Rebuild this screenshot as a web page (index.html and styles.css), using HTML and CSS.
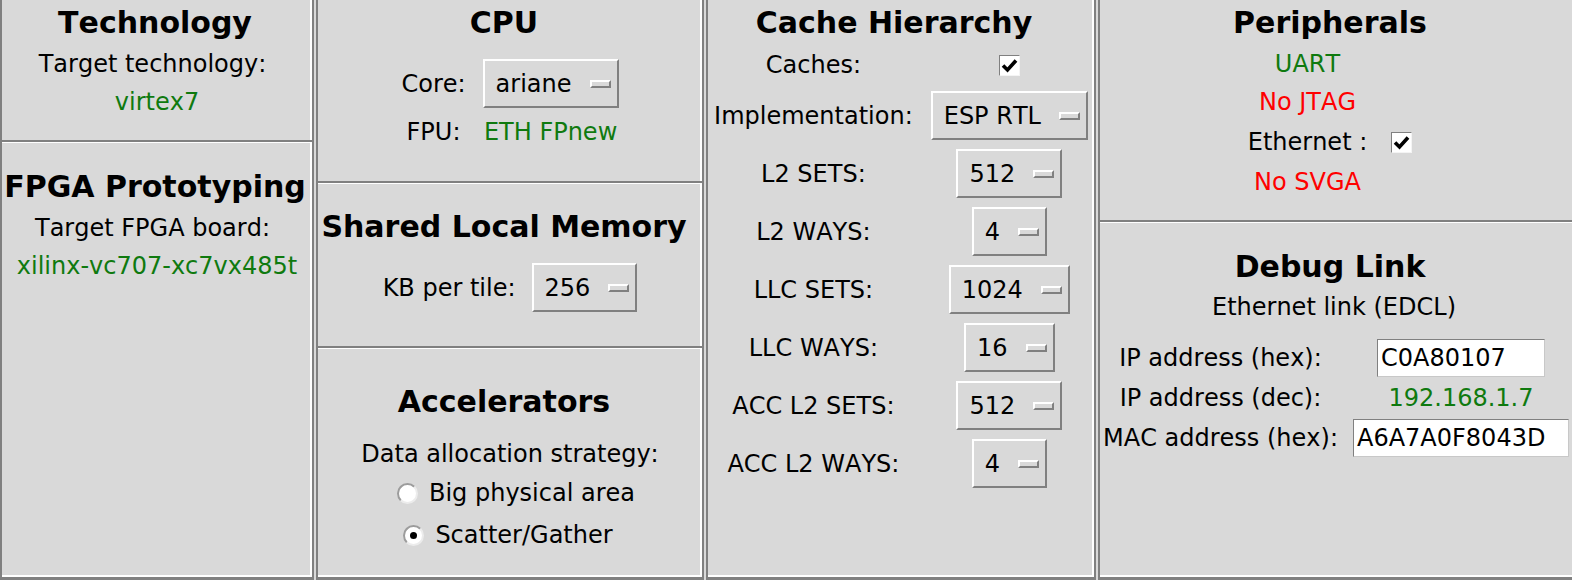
FILE: index.html
```html
<!DOCTYPE html>
<html>
<head>
<meta charset="utf-8">
<title>SoC Config</title>
<link rel="stylesheet" href="styles.css">
</head>
<body>
<div class="app">
  <div class="col col-1">
    <section class="sec sec-tech">
      <div class="title">Technology</div>
      <div class="line first trail">Target technology:</div>
      <div class="line green">virtex7</div>
    </section>
    <section class="sec sec-fpga grow">
      <div class="title">FPGA Prototyping</div>
      <div class="line first trail">Target FPGA board:</div>
      <div class="line green">xilinx-vc707-xc7vx485t</div>
    </section>
  </div>

  <div class="col col-2">
    <section class="sec sec-cpu">
      <div class="title">CPU</div>
      <div class="form form-cpu">
        <div class="lbl">Core:</div>
        <div class="opt"><span class="opt-text">ariane</span><span class="ind"></span></div>
        <div class="lbl">FPU:</div>
        <div class="lbl green">ETH FPnew</div>
      </div>
    </section>
    <section class="sec sec-slm">
      <div class="title">Shared Local Memory</div>
      <div class="form form-slm">
        <div class="lbl">KB per tile:</div>
        <div class="opt"><span class="opt-text">256</span><span class="ind"></span></div>
      </div>
    </section>
    <section class="sec sec-acc grow">
      <div class="title">Accelerators</div>
      <div class="line data-line">Data allocation strategy:</div>
      <div class="radio radio-big"><span class="rb"></span><span>Big physical area</span></div>
      <div class="radio radio-sg"><span class="rb on"></span><span>Scatter/Gather</span></div>
    </section>
  </div>

  <div class="col col-3">
    <section class="sec grow">
      <div class="title">Cache Hierarchy</div>
      <div class="form form-cache">
        <div class="lbl">Caches:</div>
        <div class="chk"><svg width="19" height="19" viewBox="0 0 19 19"><path d="M3 9.5 L7.5 14 L16 4.5" fill="none" stroke="#000" stroke-width="3.6"/></svg></div>
        <div class="lbl">Implementation:</div>
        <div class="opt"><span class="opt-text">ESP RTL</span><span class="ind"></span></div>
        <div class="lbl">L2 SETS:</div>
        <div class="opt"><span class="opt-text">512</span><span class="ind"></span></div>
        <div class="lbl">L2 WAYS:</div>
        <div class="opt"><span class="opt-text">4</span><span class="ind"></span></div>
        <div class="lbl">LLC SETS:</div>
        <div class="opt"><span class="opt-text">1024</span><span class="ind"></span></div>
        <div class="lbl">LLC WAYS:</div>
        <div class="opt"><span class="opt-text">16</span><span class="ind"></span></div>
        <div class="lbl">ACC L2 SETS:</div>
        <div class="opt"><span class="opt-text">512</span><span class="ind"></span></div>
        <div class="lbl">ACC L2 WAYS:</div>
        <div class="opt"><span class="opt-text">4</span><span class="ind"></span></div>
      </div>
    </section>
  </div>

  <div class="col col-4">
    <section class="sec sec-periph">
      <div class="title">Peripherals</div>
      <div class="form form-periph">
        <div class="lbl green">UART</div>
        <div></div>
        <div class="lbl red">No JTAG</div>
        <div></div>
        <div class="lbl">Ethernet :</div>
        <div class="chk"><svg width="19" height="19" viewBox="0 0 19 19"><path d="M3 9.5 L7.5 14 L16 4.5" fill="none" stroke="#000" stroke-width="3.6"/></svg></div>
        <div class="lbl red">No SVGA</div>
        <div></div>
      </div>
    </section>
    <section class="sec sec-debug grow">
      <div class="title">Debug Link</div>
      <div class="line edcl">Ethernet link (EDCL)</div>
      <div class="form form-debug">
        <div class="lbl">IP address (hex):</div>
        <div class="entry entry-hex">C0A80107</div>
        <div class="lbl">IP address (dec):</div>
        <div class="lbl green">192.168.1.7</div>
        <div class="lbl">MAC address (hex):</div>
        <div class="entry entry-mac">A6A7A0F8043D</div>
      </div>
    </section>
  </div>
</div>
</body>
</html>
```
FILE: styles.css
```css
* { box-sizing: border-box; }
html, body { margin: 0; padding: 0; }
body {
  background: #d9d9d9;
  font-family: "DejaVu Sans", "Liberation Sans", sans-serif;
  font-size: 24px;
  font-kerning: none;
  color: #000;
  width: 1572px;
  height: 580px;
  overflow: hidden;
}
.app { display: flex; gap: 2px; height: 580px; }

.col {
  display: flex;
  flex-direction: column;
  height: 580px;
  border-left: 2px solid #808080;
  border-right: 2px solid #808080;
  border-bottom: 3px solid #808080;
  box-shadow: inset -2px -2px 0 #fff;
  flex: none;
}
.col-1 { width: 314px; }
.col-2 { width: 388px; }
.col-3 { width: 390px; }
.col-4 { flex: 1; border-right: none; box-shadow: inset 0 -2px 0 #fff; }

.sec { display: flex; flex-direction: column; align-items: center; flex: none; }
.sec + .sec { border-top: 2px solid #808080; box-shadow: inset 0 1px 0 #fff; }
.sec.grow { flex: 1; }

.title {
  font-weight: bold;
  font-size: 30px;
  margin-top: 1px;
  padding-top: 1px;
  height: 42px;
  line-height: 41px;
  white-space: nowrap;
}
.col-1 .title { padding-right: 4px; }
.col-2 .title { padding-right: 12px; }
.col-3 .title { padding-right: 14px; }

.line { height: 38px; line-height: 38px; white-space: nowrap; }
.line.first { margin-top: 2px; }
.line.trail { padding-right: 9px; }
.green { color: #0f7a0f; }
.red { color: #ff0000; }
.lbl { white-space: nowrap; }

/* column 1 */
.sec-tech { height: 140px; }
.sec-fpga { padding-top: 22px; }

/* column 2 */
.sec-cpu { height: 181px; }
.sec-slm { height: 165px; padding-top: 21px; }
.sec-acc { padding-top: 31px; }

.form { display: grid; justify-content: center; justify-items: center; align-items: center; }
.form-cpu { margin-top: 16px; grid-template-columns: auto auto; grid-template-rows: 49px 38px; column-gap: 17px; row-gap: 5px; }
.form-slm { margin-top: 16px; grid-template-columns: auto auto; grid-template-rows: 49px; column-gap: 16px; }

.data-line { margin-top: 13px; }
.radio { display: flex; align-items: center; height: 38px; gap: 11px; white-space: nowrap; }
.radio-big { margin-top: 1px; margin-left: 12px; }
.radio-sg { margin-top: 4px; margin-right: 4px; }
.rb {
  width: 21px; height: 21px; border-radius: 50%;
  background: #fff;
  border: 2px solid;
  border-color: #9c9c9c #ececec #ececec #9c9c9c;
  display: flex; align-items: center; justify-content: center;
}
.rb.on::after { content: ""; width: 7px; height: 7px; border-radius: 50%; background: #000; }

/* option menus */
.opt {
  display: inline-flex; align-items: center;
  height: 49px;
  padding: 0 6px 0 11px;
  border: 2px solid;
  border-color: #fff #808080 #808080 #fff;
  white-space: nowrap;
}
.ind {
  width: 21px; height: 8px; margin-left: 18px;
  border: 2px solid;
  border-color: #fff #808080 #808080 #fff;
}

/* checkbox */
.chk {
  width: 21px; height: 21px;
  background: #fff;
  border: 1px solid;
  border-color: #808080 #f4f4f4 #f4f4f4 #808080;
  display: flex; align-items: center; justify-content: center;
}
.chk svg { display: block; }

/* column 3 */
.form-cache { margin-top: 5px; grid-template-columns: auto auto; grid-template-rows: 34px repeat(7, 49px); column-gap: 18px; row-gap: 9px; }

/* column 4 */
.col-4 .sec { padding-right: 12px; }
.sec-periph { height: 220px; }
.form-periph { margin-top: 2px; grid-template-columns: auto auto; grid-template-rows: 38px 38px 42px 38px; column-gap: 24px; }
.sec-debug { padding-top: 22px; }
.edcl { margin-top: 1px; padding-left: 8px; }
.form-debug { margin-top: 12px; margin-right: -12px; align-self: stretch; grid-template-columns: auto auto; grid-template-rows: 40px 40px 40px; column-gap: 15px; }

.entry {
  background: #fff;
  height: 38px;
  border: 1px solid;
  border-color: #808080 #c8c8c8 #c8c8c8 #808080;
  padding-left: 3px;
  display: flex; align-items: center;
  white-space: nowrap;
}
.entry-hex { width: 168px; }
.entry-mac { width: 216px; }
```
